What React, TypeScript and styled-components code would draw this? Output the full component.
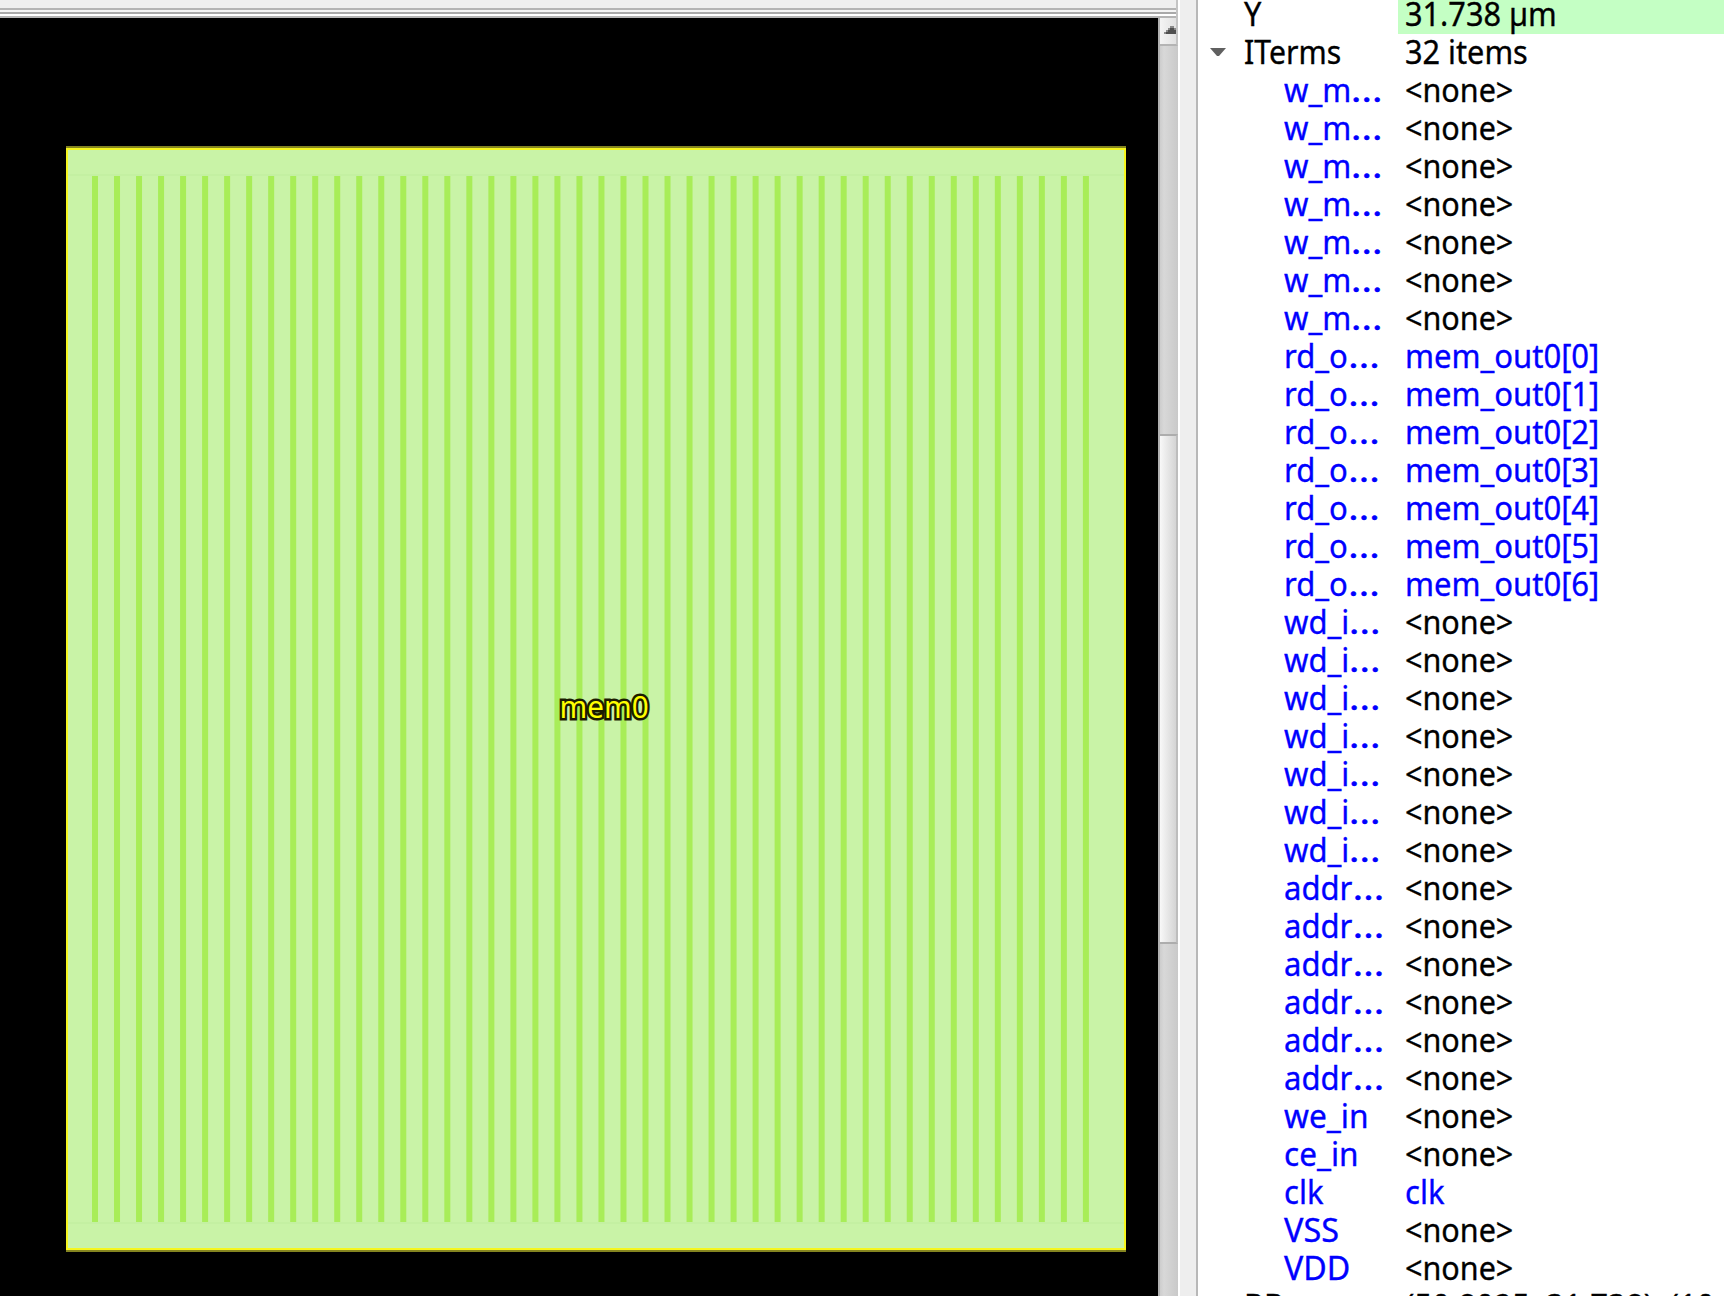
import React from "react";
import styled, { createGlobalStyle } from "styled-components";

const Global = createGlobalStyle`
  * { box-sizing: border-box; }
  body { margin: 0; background: #fff; overflow: hidden; }
`;

const Window = styled.div`
  display: flex;
  width: 1724px;
  height: 1296px;
  overflow: hidden;
  font-family: "Noto Sans", "Open Sans", sans-serif;
  font-size: 33px;
  line-height: 36px;
  color: #000;
`;

const ViewerDock = styled.section`
  display: flex;
  flex-direction: column;
  width: 1178px;
  flex: none;
`;

const Toolbar = styled.div`
  height: 18px;
  flex: none;
  border-right: 2px solid #c4c4c4;
  background: linear-gradient(#efefef 8px, #b4b4b4 8px 10px, #f4f4f4 10px 12px, #a9a9a9 12px 14px, #fff 14px 16px, #b4b4b4 16px);
`;

const Viewer = styled.div`
  display: flex;
  flex: 1;
`;

const Canvas = styled.div`
  width: 1158px;
  padding: 128px 0 0 66px;
  background: #000;
`;

const Macro = styled.div`
  display: grid;
  place-items: center;
  width: 1060px;
  height: 1106px;
`;

const Drawing = styled.svg`
  grid-area: 1 / 1;
  display: block;
`;

const MacroLabel = styled.span`
  grid-area: 1 / 1;
  z-index: 1;
  font-size: 31px;
  line-height: 38px;
  color: #ffff00;
  -webkit-text-stroke: 5px #1c1c00;
  paint-order: stroke fill;
  transform: translate(8.5px, 7px) scaleX(0.955);
`;

const ScrollTrack = styled.div`
  display: flex;
  flex-direction: column;
  width: 20px;
  border-left: 2px solid #b1b1b1;
  background: linear-gradient(90deg, #cdcdcd, #d8d8d8 4px, #c9c9c9);
`;

const ScrollArrow = styled.div`
  display: flex;
  justify-content: flex-end;
  align-items: flex-start;
  height: 28px;
  padding-top: 8px;
  border-right: 2px solid #c4c4c4;
  border-bottom: 2px solid #b4b4b4;
  background: linear-gradient(90deg, #f4f4f4, #e2e2e2);
`;

const ScrollThumb = styled.div`
  height: 510px;
  margin-top: 388px;
  border: solid #adadad;
  border-width: 2px 0;
  border-right: 2px solid #bdbdbd;
  background: linear-gradient(90deg, #f8f8f8, #d4d4d4);
`;

const Splitter = styled.div`
  width: 20px;
  flex: none;
  border-left: 2px solid #fff;
  border-right: 2px solid #b8b8b8;
  background: #eee;
`;

const Inspector = styled.section`
  flex: 1;
  margin-top: -4px;
  background: #fff;
`;

const Row = styled.div`
  display: grid;
  grid-template-columns: 200px 1fr;
  height: 38px;
`;

const NameCell = styled.div<{ $depth: number; $link?: boolean }>`
  display: flex;
  align-items: flex-start;
  padding-left: ${(p) => (p.$depth === 0 ? 12 : 86)}px;
  color: ${(p) => (p.$link ? "#0000ff" : "#000")};
  white-space: nowrap;
`;

const Expander = styled.div`
  display: flex;
  align-items: center;
  align-self: stretch;
  width: 34px;
  flex: none;
`;

const ValueCell = styled.div<{ $link?: boolean; $editable?: boolean }>`
  padding-left: 6.5px;
  color: ${(p) => (p.$link ? "#0000ff" : "#000")};
  background: ${(p) => (p.$editable ? "#c4ffc4" : "transparent")};
  white-space: nowrap;
`;

const Label = styled.span<{ $scale?: number }>`
  display: inline-block;
  -webkit-text-stroke: 0.35px currentColor;
  transform: scaleX(${(p) => p.$scale ?? 0.93});
  transform-origin: left;
`;

const Ellipsis = styled.span`
  display: inline-block;
  transform: scaleX(1.3);
  transform-origin: left;
`;

interface Item {
  name: string;
  value: string;
  link?: boolean;
  elided?: boolean;
  scale?: number;
}

const none = "<none>";
const repeat = (count: number, name: string): Item[] =>
  Array.from({ length: count }, () => ({ name, value: none, elided: true }));

const terms: Item[] = [
  ...repeat(7, "w_m"),
  ...Array.from({ length: 7 }, (_, i) => ({ name: "rd_o", value: `mem_out0[${i}]`, link: true, elided: true })),
  ...repeat(7, "wd_i"),
  ...repeat(6, "addr"),
  { name: "we_in", value: none, scale: 0.96 },
  { name: "ce_in", value: none, scale: 0.955 },
  { name: "clk", value: "clk", link: true },
  { name: "VSS", value: none, scale: 0.98 },
  { name: "VDD", value: none, scale: 0.975 },
];

function MacroDrawing() {
  return (
    <Drawing width="1060" height="1106" viewBox="0 0 1060 1106">
      <rect width="1060" height="1106" fill="#858520" />
      <rect y="2" width="1060" height="1102" fill="#f6f61e" />
      <rect x="2" y="4" width="1056" height="1098" fill="#c9f3a7" />
      <path d="M2 29H1058M2 1077H1058" stroke="#c4f0a2" strokeWidth="2" />
      {Array.from({ length: 46 }, (_, i) => (
        <rect key={i} x={26 + i * 22.02} y="30" width="6" height="1046" fill="#a8ed58" />
      ))}
    </Drawing>
  );
}

export default function App() {
  return (
    <>
      <Global />
      <Window>
        <ViewerDock>
          <Toolbar />
          <Viewer>
            <Canvas>
              <Macro>
                <MacroDrawing />
                <MacroLabel>mem0</MacroLabel>
              </Macro>
            </Canvas>
            <ScrollTrack>
              <ScrollArrow>
                <svg width="12" height="8" viewBox="0 0 12 8">
                  <path d="M0 8V6H2V4H4V2H6V0H10V2H12V8Z" fill="#8a8a8a" />
                  <path d="M2 8V6H4V4H6V2H10V4H12V8Z" fill="#505050" />
                </svg>
              </ScrollArrow>
              <ScrollThumb />
            </ScrollTrack>
          </Viewer>
        </ViewerDock>
        <Splitter />
        <Inspector>
          <Row>
            <NameCell $depth={0}><Expander /><Label>Y</Label></NameCell>
            <ValueCell $editable><Label>31.738 µm</Label></ValueCell>
          </Row>
          <Row>
            <NameCell $depth={0}>
              <Expander>
                <svg width="16" height="10" viewBox="0 0 16 10"><path d="M0 0H16L9 8H7Z" fill="#606060" /></svg>
              </Expander>
              <Label $scale={0.915}>ITerms</Label>
            </NameCell>
            <ValueCell><Label>32 items</Label></ValueCell>
          </Row>
          {terms.map((t, i) => (
            <Row key={i}>
              <NameCell $depth={1} $link>
                <Label $scale={t.scale ?? 0.94}>
                  {t.name}
                  {t.elided && <Ellipsis>…</Ellipsis>}
                </Label>
              </NameCell>
              <ValueCell $link={t.link}><Label $scale={t.link ? 0.94 : 0.925}>{t.value}</Label></ValueCell>
            </Row>
          ))}
          <Row>
            <NameCell $depth={0}><Expander /><Label>BBox</Label></NameCell>
            <ValueCell><Label $scale={0.945}>(50.8025, 31.738), (10</Label></ValueCell>
          </Row>
        </Inspector>
      </Window>
    </>
  );
}
